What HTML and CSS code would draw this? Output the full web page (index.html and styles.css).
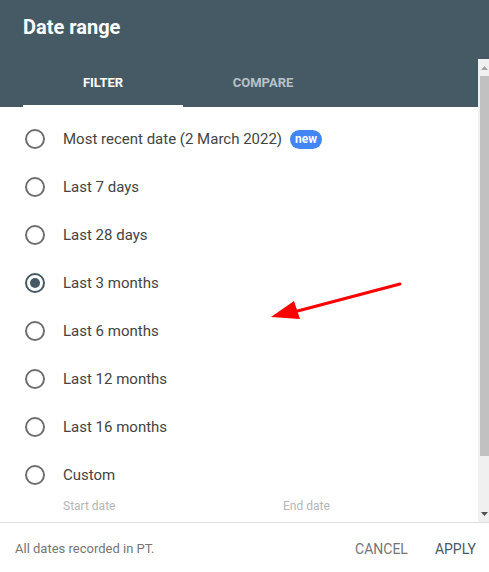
FILE: index.html
```html
<!DOCTYPE html>
<html lang="en">
  <head>
    <meta charset="UTF-8" />
    <meta name="viewport" content="width=device-width, initial-scale=1.0" />
    <title>Date range</title>
    <link rel="stylesheet" href="styles.css">
  </head>
  <body>
    <div class="dialog">
      <div class="dialog-title">Date range</div>

      <!-- Scrollable part: tabs + options, with its scrollbar -->
      <div class="dialog-body">
        <div class="scroll-content">
          <div class="tabs">
            <div class="tab active">FILTER</div>
            <div class="tab">COMPARE</div>
          </div>

          <ul class="options">
            <li class="option">
              <span class="radio"></span>
              <span class="label">Most recent date (2 March 2022)</span>
              <span class="badge">new</span>
            </li>
            <li class="option"><span class="radio"></span><span class="label">Last 7 days</span></li>
            <li class="option"><span class="radio"></span><span class="label">Last 28 days</span></li>
            <li class="option"><span class="radio checked"></span><span class="label">Last 3 months</span></li>
            <li class="option"><span class="radio"></span><span class="label">Last 6 months</span></li>
            <li class="option"><span class="radio"></span><span class="label">Last 12 months</span></li>
            <li class="option"><span class="radio"></span><span class="label">Last 16 months</span></li>
            <li class="option"><span class="radio"></span><span class="label">Custom</span></li>
          </ul>

          <div class="custom-dates">
            <div class="date-field">Start date</div>
            <div class="date-field">End date</div>
          </div>
        </div>

        <div class="scrollbar">
          <div class="scroll-btn">
            <svg width="7" height="4" viewBox="0 0 7 4"><polygon points="0,4 3.5,0 7,4" fill="#a3a3a3" /></svg>
          </div>
          <div class="scroll-thumb"></div>
          <div class="scroll-track"></div>
          <div class="scroll-btn">
            <svg width="7" height="4" viewBox="0 0 7 4"><polygon points="0,0 7,0 3.5,4" fill="#505050" /></svg>
          </div>
        </div>
      </div>

      <div class="dialog-footer">
        <span class="note">All dates recorded in PT.</span>
        <button class="btn">CANCEL</button>
        <button class="btn primary">APPLY</button>
      </div>

      <!-- Annotation arrow -->
      <svg class="annotation" width="140" height="44" viewBox="0 0 140 44">
        <line x1="130" y1="7" x2="20" y2="36" stroke="#ff0000" stroke-width="3" stroke-linecap="round" />
        <polygon points="1,40 24,24 30,42" fill="#ff0000" />
      </svg>
    </div>
  </body>
</html>
```

FILE: styles.css
```css
/* General styles */
html,
body {
  margin: 0;
  padding: 0;
  background: #ffffff;
  font-family: Roboto, "Liberation Sans", Arial, sans-serif;
}

.dialog {
  position: relative;
  width: 489px;
  height: 572px;
  display: flex;
  flex-direction: column;
  overflow: hidden;
}

.dialog-title {
  height: 59px;
  flex-shrink: 0;
  box-sizing: border-box;
  padding: 15px 23px 0;
  background-color: #455a64;
  color: #ffffff;
  font-size: 20px;
  font-weight: 700;
}

/* Scroll area */
.dialog-body {
  height: 463px;
  flex-shrink: 0;
  display: flex;
  overflow: hidden;
}
.scroll-content {
  flex: 1;
  min-width: 0;
}

.scrollbar {
  width: 11px;
  flex-shrink: 0;
  display: flex;
  flex-direction: column;
  background: #f0f0f0;
}
.scroll-btn {
  height: 17px;
  display: flex;
  align-items: center;
  justify-content: center;
  padding-left: 2px;
}
.scroll-thumb {
  height: 380px;
  margin-left: 2px;
  background: #c1c1c1;
}
.scroll-track {
  flex: 1;
}

/* Tabs */
.tabs {
  display: flex;
  height: 48px;
  padding-left: 23px;
  background-color: #455a64;
}
.tab {
  width: 160px;
  box-sizing: border-box;
  padding-top: 16px;
  text-align: center;
  font-size: 13px;
  font-weight: 700;
  color: #b6c2c8;
}
.tab.active {
  color: #ffffff;
  border-bottom: 2px solid #ffffff;
}

/* Options */
.options {
  list-style: none;
  margin: 0;
  padding: 8px 0 0;
}
.option {
  display: flex;
  align-items: center;
  height: 48px;
  padding-left: 25px;
}
.radio {
  width: 16px;
  height: 16px;
  border: 2px solid #6f6f6f;
  border-radius: 50%;
  display: flex;
  align-items: center;
  justify-content: center;
  flex-shrink: 0;
}
.radio.checked {
  border-color: #455a64;
}
.radio.checked::after {
  content: "";
  width: 10px;
  height: 10px;
  border-radius: 50%;
  background: #455a64;
}
.label {
  margin-left: 18px;
  font-size: 15px;
  color: #444444;
}
.badge {
  margin-left: 8px;
  height: 19px;
  line-height: 19px;
  padding: 0 5px;
  border-radius: 10px;
  background: #4285f4;
  color: #ffffff;
  font-size: 12px;
  font-weight: 700;
}

.custom-dates {
  display: flex;
  padding-left: 63px;
}
.date-field {
  width: 220px;
  flex-shrink: 0;
  height: 20px;
  font-size: 12px;
  color: #b5b5b5;
}

/* Footer */
.dialog-footer {
  flex: 1;
  display: flex;
  align-items: center;
  border-top: 1px solid #e0e0e0;
  padding: 2px 13px 0 15px;
}
.note {
  flex: 1;
  font-size: 13px;
  color: #757575;
}
.btn {
  border: none;
  background: none;
  padding: 0;
  font-family: inherit;
  font-size: 14px;
  color: #757575;
  cursor: pointer;
}
.btn.primary {
  margin-left: 27px;
  color: #455a64;
}

.annotation {
  position: absolute;
  left: 270px;
  top: 277px;
}
```
